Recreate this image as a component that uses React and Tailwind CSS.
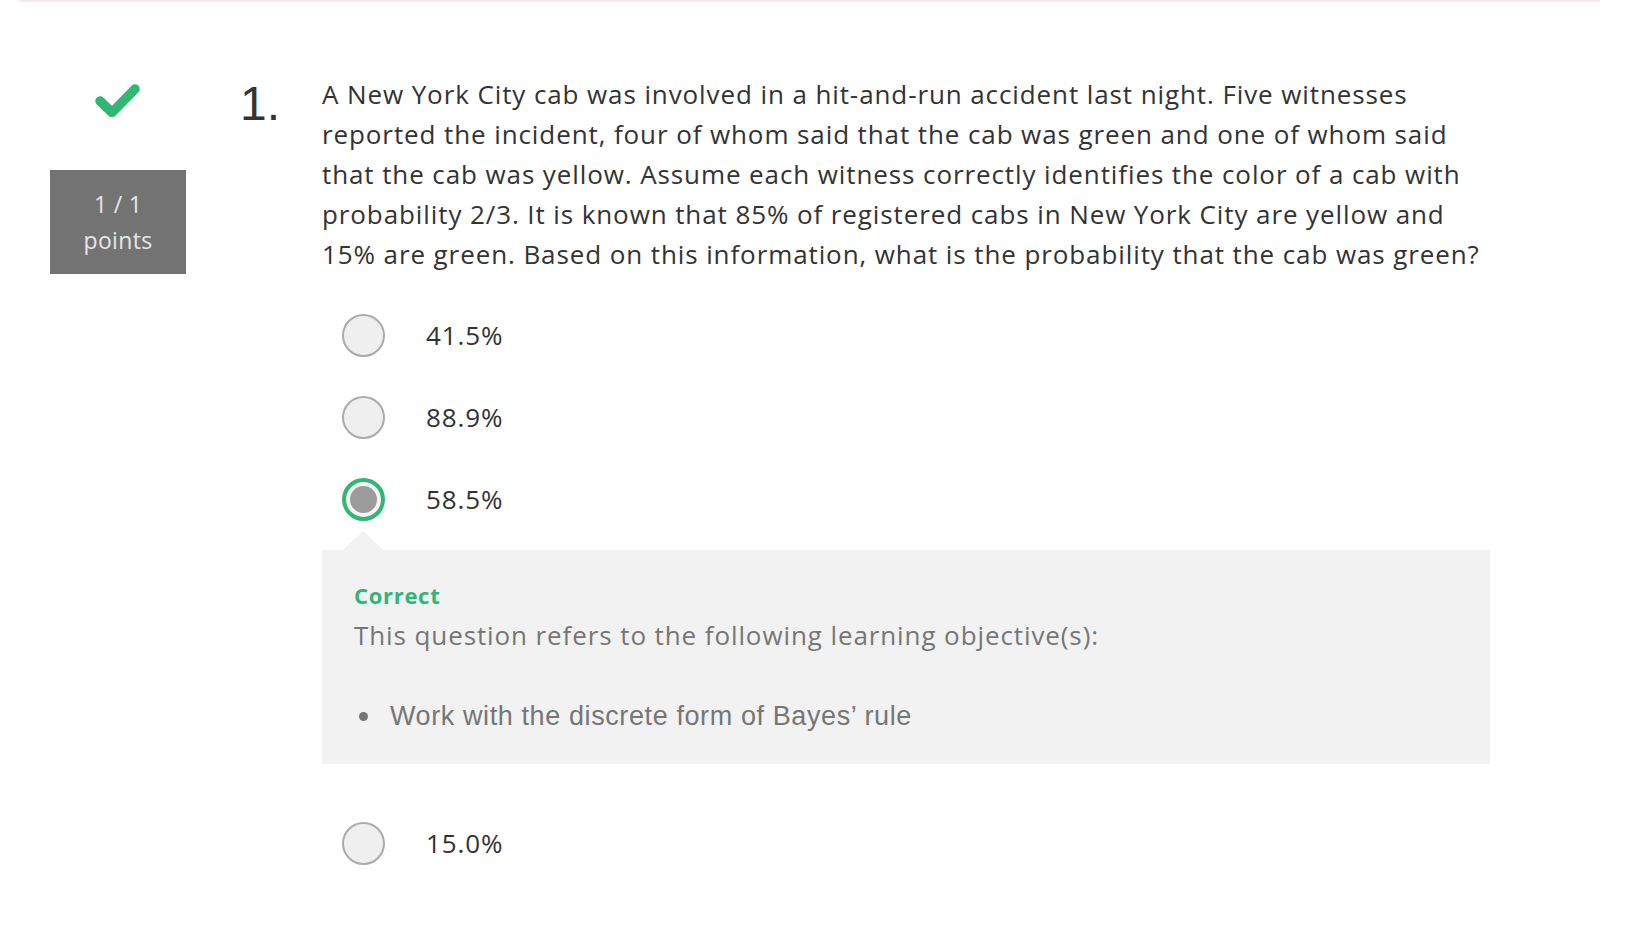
import React from 'react';

const options = [
    { label: '41.5%', selected: false },
    { label: '88.9%', selected: false },
    { label: '58.5%', selected: true },
    { label: '15.0%', selected: false },
];

const Radio = ({ selected }) =>
    selected ? (
        <div className="w-[43px] h-[43px] rounded-full border-[4px] border-[#2fb774] bg-[#f5f5f5] flex items-center justify-center">
            <div className="w-[27px] h-[27px] rounded-full bg-[#9b9b9b]" />
        </div>
    ) : (
        <div className="w-[43px] h-[43px] rounded-full border-2 border-[#ababab] bg-[#efefef]" />
    );

const Feedback = () => (
    <div className="relative mt-[10px] mb-[38px] bg-[#f2f2f2] pl-[32px] pt-[29px] pb-[28px]">
        <div className="absolute -top-[19px] left-[21px] w-0 h-0 border-l-[20px] border-r-[20px] border-b-[19px] border-l-transparent border-r-transparent border-b-[#f2f2f2]" />
        <div className="text-[22px] leading-[32px] font-bold tracking-[0.7px] text-[#2fb774]">Correct</div>
        <div className="mt-[4px] text-[26px] leading-[40px] tracking-[0.9px] text-[#767676]">
            This question refers to the following learning objective(s):
        </div>
        <ul className="mt-[41px]">
            <li className="flex items-center font-['Liberation_Sans',Arial,sans-serif] text-[27px] leading-[40px] tracking-[0.6px] text-[#767676]">
                <span className="w-[9px] h-[9px] rounded-full bg-[#777] ml-[5px] mr-[22px]" />
                Work with the discrete form of Bayes’ rule
            </li>
        </ul>
    </div>
);

export default function App() {
    return (
        <div className="min-h-screen bg-white font-['Open_Sans',sans-serif]">
            <div className="ml-[19px] mr-[28px] h-[2px] bg-[#fce6ea]" />
            <div className="flex pl-[50px] pt-[72px]">
                {/* score column */}
                <div className="w-[136px] flex flex-col items-center">
                    <svg className="mt-[9px]" width="46" height="36" viewBox="0 0 46 36">
                        <polyline
                            points="5,18 17,29.5 40,6"
                            fill="none"
                            stroke="#2fb774"
                            strokeWidth="9.5"
                            strokeLinecap="round"
                            strokeLinejoin="round"
                        />
                    </svg>
                    <div className="mt-[51px] w-[136px] h-[104px] bg-[#737373] flex flex-col items-center justify-center text-[23px] leading-[36px] tracking-[0.3px] text-[#e6e6e6]">
                        <span>1 / 1</span>
                        <span>points</span>
                    </div>
                </div>

                {/* question number */}
                <div className="ml-[54px] w-[82px] pt-[6px] font-['Liberation_Sans',Arial,sans-serif] text-[48px] leading-[48px] text-[#333]">
                    1.
                </div>

                {/* question body */}
                <div className="w-[1168px]">
                    <p className="text-[26px] leading-[40px] tracking-[0.9px] text-[#333]">
                        A New York City cab was involved in a hit-and-run accident last night. Five witnesses<br />
                        reported the incident, four of whom said that the cab was green and one of whom said<br />
                        that the cab was yellow. Assume each witness correctly identifies the color of a cab with<br />
                        probability 2/3. It is known that 85% of registered cabs in New York City are yellow and<br />
                        15% are green. Based on this information, what is the probability that the cab was green?
                    </p>

                    <div className="mt-[20px]">
                        {options.map((opt) => (
                            <React.Fragment key={opt.label}>
                                <div className="h-[82px] flex items-center pl-[20px]">
                                    <Radio selected={opt.selected} />
                                    <span className="ml-[41px] text-[26px] tracking-[0.9px] text-[#333]">{opt.label}</span>
                                </div>
                                {opt.selected && <Feedback />}
                            </React.Fragment>
                        ))}
                    </div>
                </div>
            </div>
        </div>
    );
}
